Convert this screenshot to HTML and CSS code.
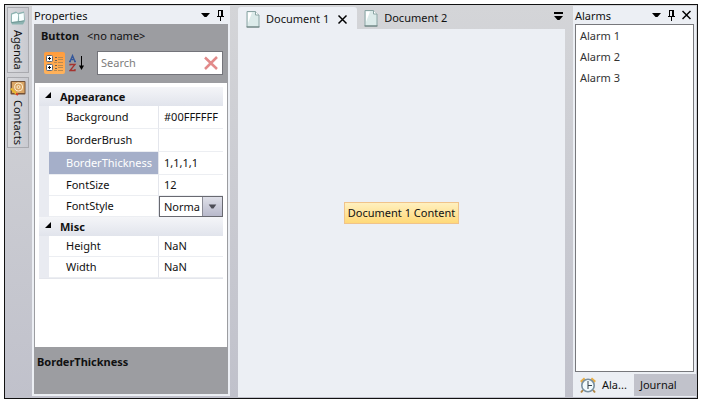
FILE: index.html
```html
<!DOCTYPE html>
<html lang="en">
<head>
<meta charset="utf-8">
<title>Docking layout</title>
<link rel="stylesheet" href="styles.css">
</head>
<body>
<div class="window">
  <nav class="rail" aria-label="Auto-hidden panes">
    <button class="rail-tab">
      <svg width="16" height="16" viewBox="0 0 16 16"><path d="M1 3.5 6 1.5 8 3l6-1.5 1 9.5-2 3.5H2L.8 12z" fill="#8db3b1"/><path d="M2 4.5 6.5 3l1.8 1.4-.6 7L2 12zM9 4.3 13.7 3l.3 7.5-4.8 1z" fill="#f8ffff"/><path d="M1.500 12.500 8 11.800l6-1" stroke="#6e9694" fill="none"/></svg>
      <span>Agenda</span>
    </button>
    <button class="rail-tab">
      <svg width="16" height="16" viewBox="0 0 16 16"><rect x=".5" y="1" width="15" height="13.5" rx="1" fill="#735135"/><rect x="2" y="2" width="12.5" height="11" fill="#d9a464"/><circle cx="8.7" cy="7" r="4" fill="none" stroke="#fff0cf"/><circle cx="8.5" cy="7" r="1.5" fill="none" stroke="#fff0cf"/><path d="M1 8.5 7 14.5" stroke="#e9bb2e" stroke-width="2"/><path d="m6 13.500 2 1.500" stroke="#d63b27" stroke-width="2"/></svg>
      <span>Contacts</span>
    </button>
  </nav>

  <section class="pane properties">
    <header class="pane-head">
      <h2>Properties</h2>
      <button class="icon-btn" aria-label="Pane menu"><svg width="9" height="12" viewBox="0 0 9 12"><path d="M0 4h9L5.500 8h-2z"/></svg></button>
      <button class="icon-btn" aria-label="Pin"><svg width="9" height="12" viewBox="0 0 9 12"><path d="M2.500 1v7M2 1.500h4M1 7.500h7M4.500 8v4" fill="none" stroke="#000"/><path d="M5 1h2v7H5z"/></svg></button>
    </header>
    <div class="inspector">
      <div class="inspector-head">
        <div class="target"><b>Button</b><span>&lt;no name&gt;</span></div>
        <div class="tools">
          <button class="tool active" aria-label="Group by category"><svg width="21" height="22" viewBox="0 0 21 22"><g fill="#fff" stroke="#59677b"><rect x="2.500" y="3.500" width="6" height="6" rx="1"/><rect x="2.500" y="12.500" width="6" height="6" rx="1"/></g><path d="M4 6.500h3M5.500 5v3M4 15.500h3M5.500 14v3" stroke="#000"/><path d="M11 5.500h2M11 8.500h2M11 13.500h2M11 16.500h2" stroke="#6c6056"/><path d="M14 5.500h5M14 7.500h5M14 10.500h5M14 13.500h5M14 15.500h5M14 18.500h5M10 10.500h3M10 18.500h3" stroke="#b98a50"/></svg></button>
          <button class="tool" aria-label="Sort alphabetically"><svg width="16" height="18" viewBox="0 0 16 18"><path d="M1 7.500 3.500 1.500 6 7.500M0 7.500h2M5 7.500h2M2 5.500h3" fill="none" stroke="#35589a" stroke-width="1.300"/><path d="M1 11.500v-1h5L1 16.500h5v-1.500" fill="none" stroke="#a5322e" stroke-width="1.300"/><path d="M12.500 2v12" stroke="#000"/><path d="M10 11.500h5L12.500 16z"/></svg></button>
          <div class="search">
            <input type="text" placeholder="Search" aria-label="Search properties">
            <button class="icon-btn" aria-label="Clear search"><svg width="16" height="16" viewBox="0 0 16 16"><path d="M2 2.500 14 14M14 2 2 14" stroke="#e28a8a" stroke-width="2.500" fill="none"/></svg></button>
          </div>
        </div>
      </div>
      <div class="grid-area">
        <table class="props">
          <colgroup><col class="c-gutter"><col class="c-name"><col></colgroup>
          <tbody>
            <tr class="group"><th colspan="3" scope="rowgroup"><svg width="7" height="7" viewBox="0 0 7 7"><path d="M6 0v6H0z"/></svg>Appearance</th></tr>
            <tr class="tall"><td></td><th scope="row">Background</th><td>#00FFFFFF</td></tr>
            <tr class="tall"><td></td><th scope="row">BorderBrush</th><td></td></tr>
            <tr class="selected"><td></td><th scope="row">BorderThickness</th><td>1,1,1,1</td></tr>
            <tr><td></td><th scope="row">FontSize</th><td>12</td></tr>
            <tr><td></td><th scope="row"><label for="font-style">FontStyle</label></th><td class="editor"><div class="combo"><select id="font-style"><option>Norma</option></select><svg width="20" height="18" viewBox="0 0 20 18"><path d="M6 7h8l-3 4H9z" fill="#4d4d56"/></svg></div></td></tr>
            <tr class="group"><th colspan="3" scope="rowgroup"><svg width="7" height="7" viewBox="0 0 7 7"><path d="M6 0v6H0z"/></svg>Misc</th></tr>
            <tr><td></td><th scope="row">Height</th><td>NaN</td></tr>
            <tr><td></td><th scope="row">Width</th><td>NaN</td></tr>
          </tbody>
        </table>
      </div>
      <div class="description">BorderThickness</div>
    </div>
  </section>

  <main class="documents">
    <div class="doc-tabs">
      <div class="doc-tab current">
        <svg width="14" height="17" viewBox="0 0 14 17"><path d="M1 .5h8.500L13 4v12H1z" fill="#dcebea" stroke="#8ba5a4"/><path d="M2 1.500h4L2 12z" fill="#fff"/><path d="M9.500.5V4H13" fill="#fff" stroke="#8ba5a4"/><path d="M.5 16h13" stroke="#647977"/></svg>
        <button>Document 1</button>
        <button class="icon-btn" aria-label="Close Document 1"><svg width="11" height="11" viewBox="0 0 11 11"><path d="m1.500 1.500 8 8M9.500 1.500l-8 8" stroke="#000" stroke-width="1.500"/></svg></button>
      </div>
      <div class="doc-tab">
        <svg width="14" height="17" viewBox="0 0 14 17"><path d="M1 .5h8.500L13 4v12H1z" fill="#dcebea" stroke="#8ba5a4"/><path d="M2 1.500h4L2 12z" fill="#fff"/><path d="M9.500.5V4H13" fill="#fff" stroke="#8ba5a4"/><path d="M.5 16h13" stroke="#647977"/></svg>
        <button>Document 2</button>
      </div>
      <button class="icon-btn overflow" aria-label="Document list"><svg width="9" height="9" viewBox="0 0 9 9"><path d="M0 0h9v2H0zM0 4h9L5.500 8h-2z"/></svg></button>
    </div>
    <div class="doc-body"><button class="content-btn">Document 1 Content</button></div>
  </main>

  <section class="pane alarms">
    <header class="pane-head">
      <h2>Alarms</h2>
      <button class="icon-btn" aria-label="Pane menu"><svg width="9" height="12" viewBox="0 0 9 12"><path d="M0 4h9L5.500 8h-2z"/></svg></button>
      <button class="icon-btn" aria-label="Pin"><svg width="9" height="12" viewBox="0 0 9 12"><path d="M2.500 1v7M2 1.500h4M1 7.500h7M4.500 8v4" fill="none" stroke="#000"/><path d="M5 1h2v7H5z"/></svg></button>
      <button class="icon-btn" aria-label="Close"><svg width="9" height="12" viewBox="0 0 9 12"><path d="m.5 2 8 8M8.500 2l-8 8" stroke="#000" stroke-width="1.500"/></svg></button>
    </header>
    <ul class="alarm-list"><li>Alarm 1</li><li>Alarm 2</li><li>Alarm 3</li></ul>
    <div class="bottom-tabs">
      <button class="current"><svg width="18" height="18" viewBox="0 0 18 18"><path d="M1 5 5 1.500 7 4 3 7zM17 5l-4-3.500L11 4l4 3z" fill="#e9ae45"/><path d="m4 14-2 2.500M14 14l2 2.500" stroke="#b08545" stroke-width="2"/><circle cx="9" cy="9.500" r="6.200" fill="#f2fafd" stroke="#7990a0" stroke-width="1.600"/><path d="M9 5v8M9 9.500h4" fill="none" stroke="#37444e"/></svg>Ala...</button>
      <button>Journal</button>
    </div>
  </section>
</div>
</body>
</html>
```

FILE: styles.css
```css
* { box-sizing: border-box; }
body {
  margin: 0;
  padding: 4px 3px 2px 4px;
  height: 100vh;
  background: #fff;
  color: #111;
  font: 11px/16px "Noto Sans", "Open Sans", sans-serif;
}
button, select, input { font: inherit; color: inherit; margin: 0; padding: 0; border: 0; background: none; }
svg { display: block; flex: none; }
h2 { margin: 0; font: inherit; flex: 1; }
.icon-btn { display: flex; align-items: center; justify-content: center; }

.window {
  display: flex;
  height: 100%;
  border: 1px solid #111;
  padding: 1px 1px 1px 2px;
  background: linear-gradient(#d4d5d8, #c0c1cb);
}

.rail { display: flex; flex-direction: column; gap: 4px; width: 22px; padding-top: 1px; }
.rail-tab {
  display: flex;
  flex-direction: column;
  align-items: center;
  gap: 4px;
  padding: 2px 0;
  border: 1px solid #a9aaaf;
  background: linear-gradient(90deg, #d8d9dd, #c9cad0);
}
.rail-tab span { writing-mode: vertical-rl; line-height: 18px; }

.pane { display: flex; flex-direction: column; background: #eceff4; }
.pane-head { display: flex; align-items: center; gap: 6px; height: 18px; }
.pane-head h2 { padding-top: 2px; }
.properties { flex: 0 0 198px; margin: 0 8px 1px 3px; padding: 0 2px 2px; }
.properties .pane-head { padding-right: 3px; }

.inspector { flex: 1; display: flex; flex-direction: column; background: #9c9da1; padding: 0 1px; }
.inspector-head { padding: 4px 4px 8px 6px; }
.target { display: flex; gap: 8px; }
.tools { display: flex; align-items: center; gap: 4px; margin-top: 7px; padding-left: 3px; }
.tool.active { border-radius: 2px; background: linear-gradient(#ff9c3c, #ffb35c); }
.search { display: flex; flex: 1; align-items: center; margin-left: 8px; height: 24px; padding: 0 3px; background: #fff; border: 1px solid #73747a; }
.search input { flex: 1; width: 0; outline: 0; }
.search input::placeholder { color: #7d7d7d; opacity: 1; }

.grid-area { flex: 1; background: #fff; padding: 4px; }
.props { width: 100%; table-layout: fixed; border-spacing: 0; border-bottom: 1px solid #e4e6ec; }
.c-gutter { width: 10px; }
.c-name { width: 110px; }
.props tr { height: 21px; }
.props tr.tall, .props tr.selected { height: 23px; }
.props tr.group { height: 19px; background: linear-gradient(#f4f5f8, #e1e4ec); }
.props td, .props th { padding: 0; text-align: left; font-weight: 400; white-space: nowrap; }
.props th[scope="row"] { padding-left: 17px; border-right: 1px solid #e4e6ec; border-bottom: 1px solid #eceef2; }
.props td:first-child { background: #e9ebf1; }
.props td:last-child { padding-left: 5px; border-bottom: 1px solid #eceef2; overflow: hidden; }
.props .selected th { background: #a5afc9; color: #fff; }
.props .group th { font-weight: 700; }
.props .group svg { display: inline-block; margin: 0 8px 2px 6px; }
.props td.editor:last-child { padding: 0; border: 0; }
.combo { display: flex; height: 21px; border: 1px solid #686970; background: #fff; }
.combo select { appearance: none; flex: 1; width: 0; padding-left: 4px; outline: 0; }
.combo svg { height: 100%; border-left: 1px solid #8b8c96; background: linear-gradient(#dedfe8, #b8b9cb); }
.description { height: 47px; padding: 7px 2px; font-weight: 700; }

.documents { flex: 1; display: flex; flex-direction: column; min-width: 0; margin-right: 8px; }
.doc-tabs { display: flex; height: 23px; padding-top: 1px; }
.doc-tab { display: flex; align-items: center; gap: 6px; padding: 0 7px; }
.doc-tab.current { padding: 2px 9px 0 8px; border-radius: 3px 3px 0 0; background: #eceff4; }
.doc-tab .icon-btn { margin-left: 2px; }
.overflow { margin: 0 2px 4px auto; }
.doc-body { flex: 1; display: flex; align-items: center; justify-content: center; background: #eceff4; }
.content-btn { padding: 2px 3px; border: 1px solid #f0c38a; background: linear-gradient(#fff0bf, #ffd978); }

.alarms { flex: 0 0 123px; padding: 0 2px; }
.alarms .pane-head { padding-right: 3px; }
.alarm-list { flex: 1; margin: 0; padding: 0 4px; list-style: none; background: #fff; border: 1px solid #77787c; line-height: 21px; color: #333; }
.bottom-tabs { display: flex; height: 22px; margin: 2px -2px 1px; background: #c1c2cb; }
.bottom-tabs button { padding: 0 6px; }
.bottom-tabs .current { display: flex; align-items: center; gap: 5px; padding: 0 7px 0 6px; background: #eceff4; }
```
